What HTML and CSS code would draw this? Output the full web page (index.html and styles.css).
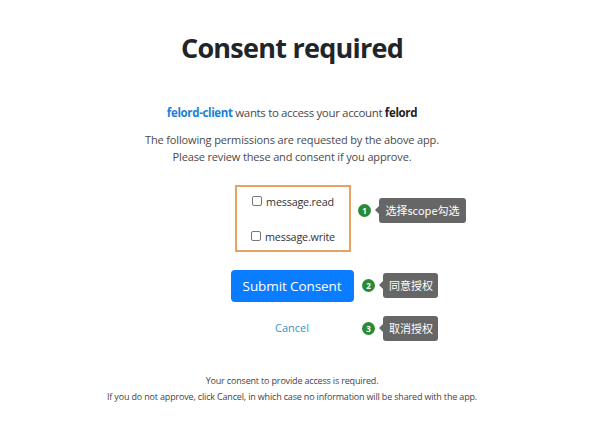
FILE: index.html
```html
<!DOCTYPE html>
<html lang="en">
<head>
<meta charset="utf-8">
<title>Consent required</title>
<link rel="stylesheet" href="styles.css">
</head>
<body>
<div class="page">
  <h1 class="title">Consent required</h1>
  <p class="client"><span class="app">felord-client</span> wants to access your account <b>felord</b></p>
  <p class="perm">The following permissions are requested by the above app.<br>Please review these and consent if you approve.</p>
  <form class="form">
    <div class="scopes">
      <label class="scope"><span class="box"></span>message.read</label>
      <label class="scope"><span class="box"></span>message.write</label>
    </div>
    <button type="button" class="submit">Submit Consent</button>
    <a class="cancel" href="#">Cancel</a>
  </form>
  <p class="foot">Your consent to provide access is required.<br>If you do not approve, click Cancel, in which case no information will be shared with the app.</p>

  <div class="note n1"><span class="num">1</span><span class="tip">选择scope勾选</span></div>
  <div class="note n2"><span class="num">2</span><span class="tip">同意授权</span></div>
  <div class="note n3"><span class="num">3</span><span class="tip">取消授权</span></div>
</div>
</body>
</html>
```
FILE: styles.css
```css
html, body {
  margin: 0;
  padding: 0;
  background: #ffffff;
}
.page {
  position: relative;
  width: 584px;
  height: 445px;
  text-align: center;
  font-family: "Open Sans", "Noto Sans", sans-serif;
  color: #4a4a4a;
}
.title {
  margin: 0;
  padding-top: 31px;
  font-size: 27px;
  line-height: 34px;
  font-weight: 700;
  letter-spacing: -0.75px;
  color: #212529;
}
.client {
  margin: 40px 0 0;
  font-size: 11.5px;
  line-height: 16px;
  letter-spacing: -0.35px;
}
.client .app {
  color: #1a7fd6;
  font-weight: 700;
}
.client b {
  color: #222;
}
.perm {
  margin: 10px 0 0;
  font-size: 11px;
  line-height: 17px;
  letter-spacing: -0.15px;
}
.form {
  margin: 20px 0 0;
  display: flex;
  flex-direction: column;
  align-items: center;
}
.scopes {
  box-sizing: border-box;
  width: 116px;
  height: 67px;
  margin-left: 2px;
  border: 2px solid #e9a162;
  padding: 4px 0;
  display: flex;
  flex-direction: column;
  gap: 15px;
}
.scope {
  height: 20px;
  display: flex;
  align-items: center;
  justify-content: center;
  gap: 4px;
  font-size: 10.8px;
  letter-spacing: -0.2px;
  color: #333;
}
.box {
  box-sizing: border-box;
  width: 10px;
  height: 10px;
  border: 1px solid #777;
  border-radius: 2px;
  background: #fff;
}
.submit {
  margin-top: 18px;
  width: 123px;
  height: 32px;
  border: 0;
  border-radius: 4px;
  background: #0a7cff;
  color: #fff;
  font-family: inherit;
  font-size: 13.5px;
  letter-spacing: -0.1px;
  padding: 0;
}
.cancel {
  margin-top: 17px;
  line-height: 18px;
  font-size: 11px;
  color: #3d8fc6;
  text-decoration: none;
}
.foot {
  margin: 36px 0 0;
  font-size: 9px;
  line-height: 16px;
  letter-spacing: -0.17px;
  color: #444;
}
.note {
  position: absolute;
  display: flex;
  align-items: center;
}
.num {
  width: 13px;
  height: 13px;
  border-radius: 50%;
  background: #2c8a36;
  color: #fff;
  font-size: 8px;
  line-height: 13px;
  font-weight: 700;
  text-align: center;
  margin-right: 8px;
}
.tip {
  position: relative;
  background: #666666;
  color: #fff;
  border-radius: 3px;
  font-family: "Noto Sans CJK SC", sans-serif;
  font-size: 11px;
  height: 25px;
  line-height: 25px;
  padding: 0 6px;
  white-space: nowrap;
}
.tip::before {
  content: "";
  position: absolute;
  left: -4px;
  top: 8px;
  border-top: 4px solid transparent;
  border-bottom: 4px solid transparent;
  border-right: 4px solid #666666;
}
.n1 { left: 358px; top: 198px; }
.n1 .tip { width: 75px; padding: 0 6px; }
.n2 { left: 362px; top: 273px; }
.n3 { left: 362px; top: 316px; }
.n2 .tip, .n3 .tip { width: 43px; }
```
